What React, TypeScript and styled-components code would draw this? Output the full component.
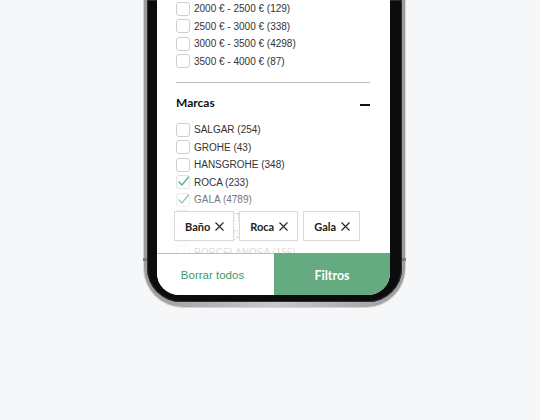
import styled, { createGlobalStyle } from 'styled-components';

const GlobalStyle = createGlobalStyle`
	html, body {
		margin: 0;
		padding: 0;
		background: #f6f7f9;
	}
	* {
		box-sizing: border-box;
	}
`;

type Option = { label: string; checked?: boolean };

const prices: Option[] = [
	{ label: '2000 € - 2500 € (129)' },
	{ label: '2500 € - 3000 € (338)' },
	{ label: '3000 € - 3500 € (4298)' },
	{ label: '3500 € - 4000 € (87)' },
];

const brands: Option[] = [
	{ label: 'SALGAR (254)' },
	{ label: 'GROHE (43)' },
	{ label: 'HANSGROHE (348)' },
	{ label: 'ROCA (233)', checked: true },
	{ label: 'GALA (4789)', checked: true },
	{ label: 'ZUCCHETTI (12)' },
	{ label: 'NOKEN (31)' },
	{ label: 'PORCELANOSA (156)' },
];

const chips = ['Baño', 'Roca', 'Gala'];

function CheckRow({ label, checked }: Option) {
	return (
		<Row>
			<Box $checked={checked}>
				{checked && (
					<Tick viewBox='0 0 14 14' fill='none'>
						<path d='M1.5 6.5 L5 10 L11.8 1.6' stroke='#52ad7c' strokeWidth='1.3' />
					</Tick>
				)}
			</Box>
			<Label>{label}</Label>
		</Row>
	);
}

export default function App() {
	return (
		<>
			<GlobalStyle />
			<Page>
				<Frame>
					<Bezel>
						<Screen>
							<Content>
								<List>
									{prices.map((p) => (
										<CheckRow key={p.label} {...p} />
									))}
								</List>
								<Divider />
								<Header>
									<Title>Marcas</Title>
									<Minus />
								</Header>
								<List $top={9}>
									{brands.map((b) => (
										<CheckRow key={b.label} {...b} />
									))}
								</List>
							</Content>

							<Footer>
								<Fade>
									{chips.map((c) => (
										<Chip key={c}>
											{c}
											<svg width='9' height='9' viewBox='0 0 9 9' fill='none'>
												<path d='M0.5 0.5 L8.5 8.5 M8.5 0.5 L0.5 8.5' stroke='#222' strokeWidth='1.1' />
											</svg>
										</Chip>
									))}
								</Fade>
								<Bar>
									<ClearButton>Borrar todos</ClearButton>
									<FilterButton>Filtros</FilterButton>
								</Bar>
							</Footer>
						</Screen>
					</Bezel>
				</Frame>
			</Page>
		</>
	);
}

const Page = styled.div`
	width: 540px;
	height: 420px;
	padding-left: 143px;
	overflow: hidden;
`;

const Frame = styled.div`
	position: relative;
	width: 263px;
	height: 308px;
	padding: 0 3px 5px 3px;
	border: 1px solid #d6d6d8;
	border-top: none;
	border-radius: 0 0 40px 40px;
	background: linear-gradient(90deg, #9c9c9e 0%, #c9c9cb 50%, #9c9c9e 100%);

	&::before,
	&::after {
		content: '';
		position: absolute;
		top: 258px;
		width: 4px;
		height: 3px;
		background: #7a7a7c;
	}
	&::before {
		left: -1px;
	}
	&::after {
		right: -1px;
	}
`;

const Bezel = styled.div`
	height: 100%;
	padding: 0 12px 7px 10px;
	background: #0c0c0c;
	border-radius: 0 0 34px 34px;
	box-shadow: inset 0 0 0 1px #2e2e2e;
`;

const Screen = styled.div`
	position: relative;
	height: 100%;
	background: #fff;
	border-radius: 0 0 22px 22px;
	overflow: hidden;
`;

const Content = styled.div`
	padding: 0 20px 0 19px;
`;

const List = styled.div<{ $top?: number }>`
	display: flex;
	flex-direction: column;
	margin-top: ${(p) => p.$top || 0}px;
`;

const Row = styled.div`
	display: flex;
	align-items: center;
	gap: 4px;
	height: 17.5px;
`;

const Box = styled.div<{ $checked?: boolean }>`
	position: relative;
	flex-shrink: 0;
	width: 14px;
	height: 14px;
	border: 1px solid ${(p) => (p.$checked ? '#e2e2e2' : '#cfcfcf')};
	border-radius: 3px;
	background: #fff;
`;

const Tick = styled.svg`
	position: absolute;
	left: 0;
	top: -1px;
	width: 14px;
	height: 14px;
	overflow: visible;
`;

const Label = styled.span`
	font-family: 'Liberation Sans', Arial, sans-serif;
	font-size: 10px;
	color: #333;
	white-space: nowrap;
`;

const Divider = styled.div`
	height: 1px;
	margin: 12px 0 9px;
	background: #bdbdbd;
`;

const Header = styled.div`
	display: flex;
	align-items: center;
	justify-content: space-between;
	height: 20px;
`;

const Title = styled.span`
	font-family: Lato, 'Open Sans', sans-serif;
	font-weight: 700;
	font-size: 12px;
	color: #111;
`;

const Minus = styled.span`
	width: 10px;
	height: 2px;
	margin-top: 5px;
	background: #111;
`;

const Footer = styled.div`
	position: absolute;
	left: 0;
	right: 0;
	bottom: 0;
`;

const Fade = styled.div`
	display: flex;
	gap: 5px;
	padding: 23px 0 12px 17px;
	background: linear-gradient(
		to bottom,
		rgba(255, 255, 255, 0) 0%,
		rgba(255, 255, 255, 0.78) 42%,
		rgba(255, 255, 255, 0.82) 100%
	);
`;

const Chip = styled.div`
	display: flex;
	align-items: center;
	gap: 5px;
	height: 30px;
	padding: 0 9px 0 10px;
	border: 1px solid #dadada;
	background: #fff;
	font-family: Lato, 'Open Sans', sans-serif;
	font-weight: 700;
	font-size: 11px;
	color: #222;
`;

const Bar = styled.div`
	display: grid;
	grid-template-columns: 117px 1fr;
	height: 42px;
`;

const ClearButton = styled.div`
	display: flex;
	align-items: center;
	justify-content: center;
	padding-right: 6px;
	border-top: 1px solid #a4cdb3;
	background: #fff;
	font-family: 'Liberation Sans', Arial, sans-serif;
	font-size: 11.5px;
	color: #3d9a66;
`;

const FilterButton = styled.div`
	display: flex;
	align-items: center;
	justify-content: center;
	padding-top: 2px;
	background: #65aa80;
	font-family: Lato, 'Open Sans', sans-serif;
	font-weight: 700;
	font-size: 12.5px;
	color: #fff;
`;
